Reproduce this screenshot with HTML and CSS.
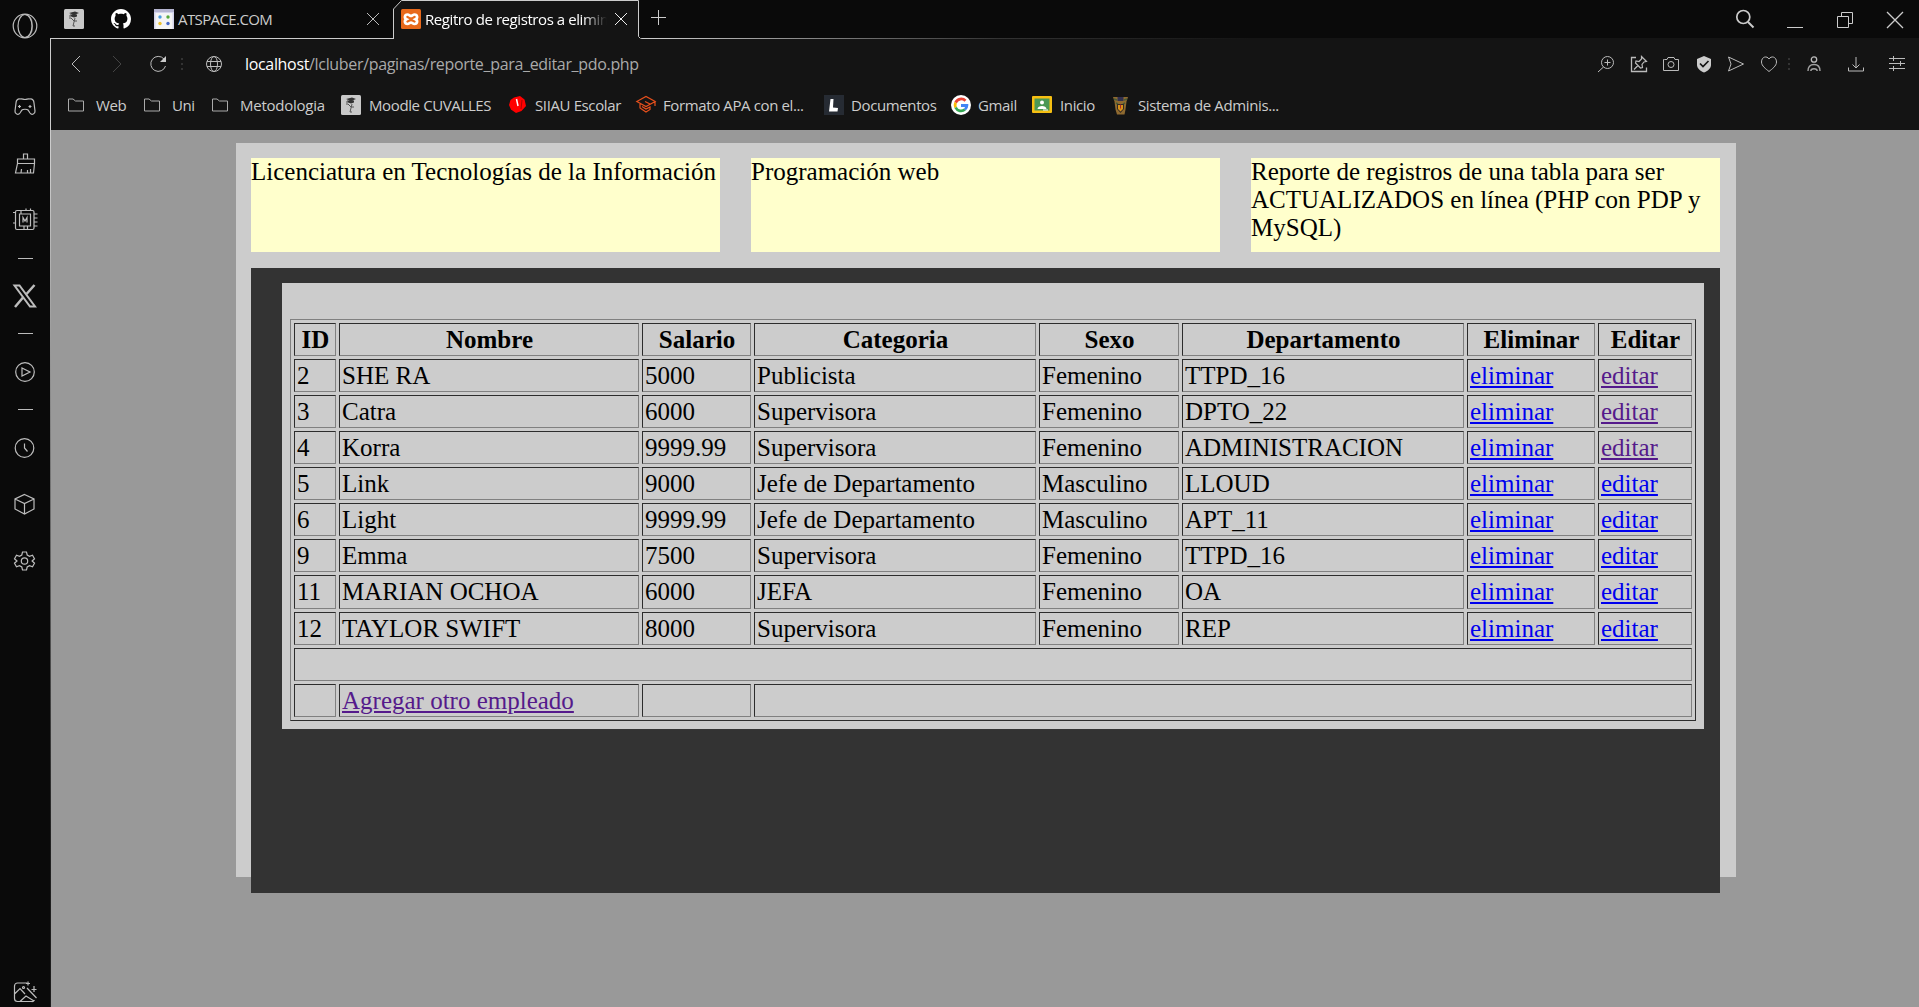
FILE: index.html
```html
<!DOCTYPE html>
<html lang="es">
<head>
<meta charset="utf-8">
<title>Regitro de registros a eliminar</title>
<link rel="stylesheet" href="styles.css">
</head>
<body>
<div class="browser">
  <aside class="sidebar">
    <div class="slot slot-logo"><svg class="icon" viewBox="0 0 26 26"><circle cx="13" cy="13" r="11.8"/><ellipse cx="13" cy="13" rx="7" ry="11.500"/><path d="M13 1.500c5 1 7.500 5.500 7.500 11.500s-2.500 10.500-7.500 11.500" opacity=".6"/></svg></div>
    <div class="slot"><svg class="icon" viewBox="0 0 26 26"><path d="M4 9c0-3 2-4.500 4-4 2-.6 3 .5 5 .5s3-1.100 5-.5c2-.5 4 1 4 4l1 8c.3 3-3.200 4.500-5 2l-2-3c-1-1-5-1-6 0l-2 3c-1.800 2.500-5.300 1-5-2z"/><path d="M7.500 11v3M6 12.500h3M18 11v3M16.500 12.500h3"/></svg></div>
    <div class="slot"><svg class="icon" viewBox="0 0 26 26"><path d="M11.500 8V3h4v5M5.500 8h17v4.500h-17zM5.500 12.500L3.500 22h18l1-9.500M9 22l.5-4M15.500 22v-3M18.500 22v-4"/></svg></div>
    <div class="slot"><svg class="icon" viewBox="0 0 26 26"><path d="M5 3.500h15.500a1.500 1.500 0 0 1 1.500 1.500v16a1.500 1.500 0 0 1-1.500 1.500H5A1.500 1.500 0 0 1 3.500 21V5A1.500 1.500 0 0 1 5 3.500z"/><path d="M7.500 7h11v12h-11z"/><path d="M11 15.500V10.500l2 3.500 2-3.500v5M9 4v3M14 1.500v2M18.500 1.500v2M12 19v3.500M15.500 19v3.500M22 7h3.500M22 11h3.500M22 15h3.500M22 19h3.500M1 5.500h2.500M1 16h2.500"/></svg></div>
    <div class="divider"></div>
    <div class="slot"><svg class="icon" viewBox="0 0 26 26"><path d="M2.500 2.500h5L23 23.500h-5z" stroke-width="2"/><path d="M22.500 2L14.500 11M11 14.500L3 24" stroke-width="2.500"/></svg></div>
    <div class="divider"></div>
    <div class="slot"><svg class="icon" viewBox="0 0 26 26"><circle cx="13" cy="13" r="9.300"/><path d="M10 9l8 4-8 4z"/></svg></div>
    <div class="divider"></div>
    <div class="slot"><svg class="icon" viewBox="0 0 26 26"><circle cx="12.500" cy="13" r="9.300"/><path d="M12.500 8.500V13l3 3.500"/></svg></div>
    <div class="slot"><svg class="icon" viewBox="0 0 26 26"><path d="M12.500 3.500l9.500 4.500v10L12.500 23 3 18V8zM3 8l9.500 4.500L22 8M12.500 12.500V23"/></svg></div>
    <div class="slot"><svg class="icon" viewBox="0 0 26 26"><path d="M10.500 4h4l.7 3 2.300 1.300 3-1 2 3.500-2.400 2.200 2.400 2.200-2 3.500-3-1-2.300 1.300-.7 3h-4l-.7-3-2.300-1.300-3 1-2-3.500L5 13l-2.500-2.200 2-3.500 3 1L9.800 7z"/><circle cx="12.500" cy="13" r="3.200"/></svg></div>
    <div class="slot slot-bottom"><svg class="icon" viewBox="0 0 26 26"><path d="M15 4H5.500a3 3 0 0 0-3 3v12.500a3 3 0 0 0 3 3h14a3 3 0 0 0 3-1.500M2.500 15L8 9.500l5 5.500M8 22.500l6-5.500 8 5M15 9l9.500 10M16 2.500v4M14 4.500h4M22 7v6M19.500 10.500h5"/><circle cx="11.500" cy="8.500" r="1"/></svg></div>
  </aside>

  <div class="window">
    <header class="tabs">
      <div class="pin"><svg class="fav" viewBox="0 0 20 20"><rect width="20" height="20" rx="1.500" fill="#c9c9c9"/><path d="M5 4l6-1.500 4 1.500-5 2zM6 5.500h7v2l-3 1-3-1z" fill="#333"/><path d="M6 6v4M7 9l3 3h3M11 9l-2 8h2" fill="none" stroke="#555"/></svg></div>
      <div class="pin"><svg class="fav" viewBox="0 0 16 16"><path fill="#fff" d="M8 0C3.580 0 0 3.580 0 8c0 3.540 2.290 6.530 5.470 7.590.4.070.55-.17.55-.38 0-.19-.01-.82-.01-1.490-2.010.37-2.530-.49-2.690-.94-.09-.23-.48-.94-.82-1.130-.28-.15-.68-.52-.01-.53.63-.01 1.080.58 1.230.82.720 1.210 1.870.87 2.330.66.070-.52.280-.87.510-1.070-1.780-.2-3.640-.89-3.640-3.950 0-.87.310-1.590.820-2.150-.08-.2-.36-1.020.080-2.120 0 0 .67-.21 2.200.820.640-.18 1.320-.27 2-.27s1.360.09 2 .27c1.530-1.040 2.200-.82 2.200-.82.440 1.100.160 1.920.080 2.120.510.560.820 1.270.820 2.150 0 3.070-1.870 3.750-3.650 3.950.290.250.540.730.540 1.480 0 1.070-.01 1.930-.01 2.200 0 .21.150.46.550.38A8.010 8.010 0 0 0 16 8c0-4.420-3.580-8-8-8z"/></svg></div>
      <div class="tab">
        <svg class="fav" viewBox="0 0 20 20"><rect width="20" height="20" fill="#f5f5f5"/><rect width="20" height="3.500" fill="#b4b4d0"/><path d="M0 3h20v1H0zM0 4h1.500v16H0zM18.500 4H20v16h-1.500z" fill="#d4d4ec"/><circle cx="6" cy="8" r="1.700" fill="#4a9be0"/><circle cx="14" cy="8" r="1.700" fill="#55a83c"/><circle cx="6" cy="14.500" r="1.700" fill="#eec22e"/><circle cx="14" cy="14.500" r="1.700" fill="#4569c8"/></svg>
        <span class="tab-title t-atspace">ATSPACE.COM</span>
        <svg class="close" viewBox="0 0 14 14"><path d="M1 1l12 12M13 1L1 13"/></svg>
      </div>
      <div class="tab tab-active">
        <svg class="tab-shape" viewBox="0 0 248 40"><path class="tab-fill" d="M.5 39V9.500L9 .5h236.500V36l3 3V40H0z"/><path class="tab-line" d="M.5 39V9L8.500.5h237V36.500l2 2"/></svg>
        <svg class="fav" viewBox="0 0 20 20"><rect width="20" height="20" rx="1.500" fill="#e8691b"/><path d="M6.500 5.500c-3 0-3.500 3.500-1 4.700-2.500 1.300-2 4.800 1 4.800 1.500 0 2.500-1.500 3.500-1.500s2 1.500 3.500 1.500c3 0 3.500-3.500 1-4.800 2.500-1.200 2-4.700-1-4.700-1.500 0-2.500 1.500-3.500 1.500s-2-1.500-3.500-1.500z" fill="none" stroke="#fff" stroke-width="2.700"/></svg>
        <span class="tab-title t-active">Regitro de registros a elimin</span>
        <svg class="close" viewBox="0 0 14 14"><path d="M1 1l12 12M13 1L1 13"/></svg>
      </div>
      <svg class="plus" viewBox="0 0 15 15"><path d="M7.500 0v15M0 7.500h15"/></svg>
      <div class="win-controls">
        <svg class="ctl" viewBox="0 0 24 24"><circle cx="10.300" cy="10" r="6.500" stroke-width="1.700"/><path d="M15 15l5.500 5.500" stroke-width="2"/></svg>
        <svg class="ctl" viewBox="0 0 24 24"><path d="M4 20.500h16"/></svg>
        <svg class="ctl" viewBox="0 0 24 24"><path d="M4.500 9.500h11v11h-11zM8.500 9.500v-4h11v11h-4"/></svg>
        <svg class="ctl" viewBox="0 0 24 24"><path d="M4 5l16 16M20 5L4 21" stroke-width="1.300"/></svg>
      </div>
    </header>

    <nav class="toolbar">
      <svg class="tool" viewBox="0 0 24 24"><path d="M16 4l-8 8 8 8"/></svg>
      <svg class="tool dim" viewBox="0 0 24 24"><path d="M8 4l8 8-8 8"/></svg>
      <svg class="tool" viewBox="0 0 24 24"><path d="M18 7a7.500 7.500 0 1 0 1.500 7"/><path d="M20 4v6h-6z" fill="#ccc" stroke="none"/></svg>
      <span class="dots"></span>
      <svg class="tool" viewBox="0 0 24 24"><circle cx="12" cy="12" r="7.500"/><ellipse cx="12" cy="12" rx="3.500" ry="7.500"/><path d="M5 9.500h14M5 14.500h14"/></svg>
      <span class="url"><b>localhost</b>/lcluber/paginas/reporte_para_editar_pdo.php</span>
      <svg class="tool" viewBox="0 0 24 24"><circle cx="13.500" cy="10.500" r="6"/><path d="M9.500 15L4 20M13.500 7.500v6M10.500 10.500h6"/></svg>
      <svg class="tool" viewBox="0 0 24 24"><path d="M9 5.500H4.500v14h15v-4" stroke-width="1.300"/><path d="M14.500 4.500l5 5-2.500.5-2 2.500.5 3-2 .5-5-5 .5-2 3 .5 2.500-2.500zM11 13.500L7 17.500" stroke-width="1.200"/></svg>
      <svg class="tool" viewBox="0 0 24 24"><path d="M5.500 7.500H8l1-2h6l1 2h3.500v11h-15v-11z"/><circle cx="12" cy="12.500" r="3"/></svg>
      <svg class="tool" viewBox="0 0 24 24"><path d="M12 4l7 3v6c0 3.500-3.500 6-7 7.500C8.500 19 5 16.500 5 13V7z" fill="#ccc" stroke="none"/><path d="M8 11.500l3 3 5.500-5.500" stroke="#141414" stroke-width="1.700"/></svg>
      <svg class="tool" viewBox="0 0 24 24"><path d="M4.500 5L19.500 12l-15 7 2.500-7z"/></svg>
      <svg class="tool" viewBox="0 0 24 24"><path d="M12 7C10 3.500 4.500 4.500 4.500 10c0 4 4.500 7 7.500 9.500 3-2.500 7.500-5.500 7.500-9.500C19.500 4.500 14 3.500 12 7z"/></svg>
      <span class="dots"></span>
      <svg class="tool" viewBox="0 0 24 24"><circle cx="12" cy="7.500" r="2.700" stroke-width="1.300"/><path d="M6 19c0-4 2-6.500 6-6.500s6 2.500 6 6.500M8.800 19c0-3 6.400-3 6.400 0" stroke-width="1.400" opacity=".85"/></svg>
      <svg class="tool" viewBox="0 0 24 24"><path d="M12 5v11M8.500 12.500L12 16l3.500-3.500M4.500 15.500v3.500h15v-3.500"/></svg>
      <svg class="tool" viewBox="0 0 24 24"><path d="M4 6.500h16M4 11.500h16M4 16.500h16M8.500 4v5M15.500 9v5M8.500 14v5"/></svg>
    </nav>

    <nav class="bookmarks">
      <a class="bm bm-web"><svg class="folder" viewBox="0 0 18 14"><path d="M1.500 1h4.500l2.500 2h8v10h-15z"/></svg><span>Web</span></a>
      <a class="bm bm-uni"><svg class="folder" viewBox="0 0 18 14"><path d="M1.500 1h4.500l2.500 2h8v10h-15z"/></svg><span>Uni</span></a>
      <a class="bm bm-met"><svg class="folder" viewBox="0 0 18 14"><path d="M1.500 1h4.500l2.500 2h8v10h-15z"/></svg><span>Metodologia</span></a>
      <a class="bm bm-moodle"><svg class="fav" viewBox="0 0 20 20"><rect width="20" height="20" rx="1.500" fill="#c9c9c9"/><path d="M5 4l6-1.500 4 1.500-5 2zM6 5.500h7v2l-3 1-3-1z" fill="#333"/><path d="M6 6v4M7 9l3 3h3M11 9l-2 8h2" fill="none" stroke="#555"/></svg><span>Moodle CUVALLES</span></a>
      <a class="bm bm-siiau"><svg class="fav" viewBox="0 0 20 20"><path d="M6 2.500L12 1l4.500 3.500L18 11l-4.500 5-5.500 2-5-3.500L1 10l1.500-5z" fill="#f00"/><path d="M8.500 4l1.500 7" stroke="#fff" stroke-width="1.500"/><path d="M14 5l-1 9" stroke="#a00"/></svg><span>SIIAU Escolar</span></a>
      <a class="bm bm-apa"><svg class="fav" viewBox="0 0 20 20"><path d="M.8 6.500L10 1.500l9.200 5-9.200 5zM19 6.500V11M4 9v4l6 4 4-2.500V12l-4 2-4-2.500M9 6.500l5 2.500" fill="none" stroke="#e8501c" stroke-width="1.200"/></svg><span>Formato APA con el...</span></a>
      <a class="bm bm-doc"><svg class="fav" viewBox="0 0 20 20"><rect width="20" height="20" fill="#262b33"/><path d="M6.500 4h3l-.5 8.500 5 .5-.5 3.500H5z" fill="#fff"/></svg><span>Documentos</span></a>
      <a class="bm bm-gmail"><svg class="fav" viewBox="0 0 20 20"><circle cx="10" cy="10" r="10" fill="#fff"/><g fill="none" stroke-width="2.800"><path d="M14.500 5.800A6 6 0 0 0 4.600 7.600" stroke="#ea4335"/><path d="M4.600 7.600a6 6 0 0 0 0 4.900" stroke="#fbbc05"/><path d="M4.600 12.500a6 6 0 0 0 9.300 2" stroke="#34a853"/><path d="M13.900 14.500c1.500-1.200 2-2.500 2-4H10" stroke="#4285f4"/></g></svg><span>Gmail</span></a>
      <a class="bm bm-inicio"><svg class="fav" viewBox="0 0 20 20"><rect y="1" width="20" height="17" rx="1" fill="#f6bf12"/><rect x="2.500" y="3.500" width="15" height="12" fill="#4a9855"/><circle cx="10" cy="7.500" r="2" fill="#fff"/><path d="M5.500 14c0-4 9-4 9 0zM11 14.500h5v1h-5z" fill="#fff"/></svg><span>Inicio</span></a>
      <a class="bm bm-sis"><svg class="fav" viewBox="0 0 20 20"><path d="M2 2h15l-1.500 4.500-1 8-1 5H6l-1.500-5-1-8z" fill="#8f6a30"/><path d="M3 4l3 1M16 4l-3 1M5 8l2 1M14 8l-2 1" stroke="#465c35" stroke-width="1.500"/><path d="M6.500 2h6v4h-6z" fill="#313050"/><path d="M6 9h7v5l-3.500 4L6 14z" fill="#332b26"/><path d="M7 10h5v4l-2.500 2.500L7 14z" fill="#d89018"/><path d="M9.500 9.500v4" stroke="#b02824"/></svg><span>Sistema de Adminis...</span></a>
    </nav>

    <main class="page">
      <div class="container">
        <div class="heads">
          <div class="head">Licenciatura en Tecnologías de la Información</div>
          <div class="head">Programación web</div>
          <div class="head">Reporte de registros de una tabla para ser ACTUALIZADOS en línea (PHP con PDP y MySQL)</div>
        </div>
        <div class="body-box">
          <div class="inner">
            <table class="report">
              <colgroup><col class="c-id"><col class="c-nombre"><col class="c-salario"><col class="c-cat"><col class="c-sexo"><col class="c-dep"><col class="c-elim"><col class="c-edit"></colgroup>
              <tr><th>ID</th><th>Nombre</th><th>Salario</th><th>Categoria</th><th>Sexo</th><th>Departamento</th><th>Eliminar</th><th>Editar</th></tr>
              <tr><td>2</td><td>SHE RA</td><td>5000</td><td>Publicista</td><td>Femenino</td><td>TTPD_16</td><td><a class="link">eliminar</a></td><td><a class="link seen">editar</a></td></tr>
              <tr><td>3</td><td>Catra</td><td>6000</td><td>Supervisora</td><td>Femenino</td><td>DPTO_22</td><td><a class="link">eliminar</a></td><td><a class="link seen">editar</a></td></tr>
              <tr><td>4</td><td>Korra</td><td>9999.99</td><td>Supervisora</td><td>Femenino</td><td>ADMINISTRACION</td><td><a class="link">eliminar</a></td><td><a class="link seen">editar</a></td></tr>
              <tr><td>5</td><td>Link</td><td>9000</td><td>Jefe de Departamento</td><td>Masculino</td><td>LLOUD</td><td><a class="link">eliminar</a></td><td><a class="link">editar</a></td></tr>
              <tr><td>6</td><td>Light</td><td>9999.99</td><td>Jefe de Departamento</td><td>Masculino</td><td>APT_11</td><td><a class="link">eliminar</a></td><td><a class="link">editar</a></td></tr>
              <tr><td>9</td><td>Emma</td><td>7500</td><td>Supervisora</td><td>Femenino</td><td>TTPD_16</td><td><a class="link">eliminar</a></td><td><a class="link">editar</a></td></tr>
              <tr class="tall"><td>11</td><td>MARIAN OCHOA</td><td>6000</td><td>JEFA</td><td>Femenino</td><td>OA</td><td><a class="link">eliminar</a></td><td><a class="link">editar</a></td></tr>
              <tr><td>12</td><td>TAYLOR SWIFT</td><td>8000</td><td>Supervisora</td><td>Femenino</td><td>REP</td><td><a class="link">eliminar</a></td><td><a class="link">editar</a></td></tr>
              <tr><td colspan="8">&nbsp;</td></tr>
              <tr><td>&nbsp;</td><td><a class="link seen">Agregar otro empleado</a></td><td>&nbsp;</td><td colspan="5">&nbsp;</td></tr>
            </table>
          </div>
        </div>
      </div>
    </main>
  </div>
</div>
</body>
</html>
```
FILE: styles.css
```css
* { box-sizing: border-box; }
body { margin: 0; background: #0a0a0a; }
svg { display: block; flex: none; overflow: visible; fill: none; }

.browser {
  display: flex;
  width: 1919px;
  height: 1007px;
  overflow: hidden;
  background: #0a0a0a;
  font-family: "Open Sans", "Noto Sans", sans-serif;
  font-size: 15px;
  color: #ccc;
}

/* sidebar */
.sidebar {
  display: flex;
  flex-direction: column;
  align-items: center;
  width: 50px;
  flex: none;
}
.slot { display: flex; align-items: center; height: 56.5px; flex: none; }
.slot-logo { height: 51px; margin-bottom: 28px; }
.slot-bottom { height: 30px; margin-top: auto; }
.icon { width: 26px; height: 26px; stroke: #bdbdbd; stroke-width: 1.2; }
.divider { width: 15px; height: 1px; margin: 9px 0 9.3px; background: #bbb; flex: none; }

/* window: the left edge line starts below the tab bar */
.window {
  display: flex;
  flex-direction: column;
  width: 1869px;
  flex: none;
  background: linear-gradient(#ccc, #ccc 130px, #777 430px, #222 800px, #1a1a1a) 0 38px / 1px 100% no-repeat;
}

/* tabs */
.tabs {
  display: flex;
  align-items: center;
  height: 39px;
  flex: none;
  padding-bottom: 2px;
  background: linear-gradient(90deg, #ccc 600px, #333 950px, #141414 1200px) 0 38px / 100% 1px no-repeat;
}
.fav { width: 20px; height: 20px; }
.pin { width: 47px; padding-left: 14px; }
.tab { display: flex; align-items: center; width: 246px; padding-left: 10px; }
.tab:nth-child(3) { width: 249px; }
.tab-title { margin-left: 4px; white-space: nowrap; }
.t-atspace { letter-spacing: -0.6px; width: 188px; }
.t-active {
  width: 183px;
  color: #fff;
  letter-spacing: -0.42px;
  -webkit-mask-image: linear-gradient(90deg, #000 158px, transparent 182px);
  mask-image: linear-gradient(90deg, #000 158px, transparent 182px);
}
.close { width: 14px; height: 14px; stroke: #bbb; }
.tab-active { position: relative; align-self: flex-start; height: 39px; padding: 0 0 2px 8px; }
.tab-active > * { position: relative; }
.tab-active .close { margin-left: 6px; stroke: #eee; }
.tab-active .tab-shape { position: absolute; left: 0; top: 0; width: 248px; height: 40px; }
.tab-fill { fill: #141414; }
.tab-line { stroke: #ccc; }
.plus { width: 15px; height: 15px; margin: 0 0 2px 12px; stroke: #ccc; }
.win-controls { display: flex; margin: 0 12px 0 auto; gap: 26px; }
.ctl { width: 24px; height: 24px; stroke: #ccc; stroke-width: 1; }

/* toolbar */
.toolbar {
  display: grid;
  grid-template-columns: 41px 41px 42px 6px 58px 1fr repeat(6, 32.5px) 8px 42px 41px 42px;
  align-items: center;
  justify-items: center;
  height: 50px;
  flex: none;
  margin-left: 1px;
  padding: 0 1px 0 4px;
  background: #141414;
}
.tool { width: 24px; height: 24px; stroke: #bbb; stroke-width: 1; }
.dim { stroke: #444; }
.dots {
  width: 2px;
  height: 12px;
  background: repeating-linear-gradient(#333 0 2px, transparent 2px 5px);
}
.url {
  justify-self: start;
  padding-left: 2px;
  font-size: 16px;
  color: #aaa;
  letter-spacing: -0.33px;
}
.url b { font-weight: 400; color: #fff; }

/* bookmarks */
.bookmarks {
  display: flex;
  align-items: center;
  height: 41px;
  flex: none;
  margin-left: 1px;
  padding: 0 0 9px 16px;
  background: #141414;
}
.bm { display: flex; align-items: center; flex: none; white-space: nowrap; letter-spacing: -0.38px; }
.folder { width: 18px; height: 14px; margin-right: 11px; stroke: #aaa; }
.bm .fav { margin-right: 7px; }
.bm-web { width: 76px; }
.bm-uni { width: 68px; }
.bm-met { width: 130px; letter-spacing: -0.25px; }
.bm-moodle { width: 167px; }
.bm-siiau { width: 128px; }
.bm-apa { width: 188px; }
.bm-doc { width: 127px; }
.bm-gmail { width: 81px; }
.bm-inicio { width: 79px; }
.bm-moodle .fav { margin-right: 8px; }
.bm-inicio .fav { margin-right: 8px; }

/* page */
.page {
  flex: 1;
  margin-left: 1px;
  padding: 13px 0 0 185px;
  background: #999;
  color: #000;
  font-family: "Liberation Serif", "Times New Roman", serif;
  font-size: 25px;
  line-height: 28px;
}
.container { width: 1500px; height: 734px; padding: 15px 16px 0 15px; background: #ccc; }
.heads { display: grid; grid-template-columns: repeat(3, 469px); column-gap: 31px; height: 94px; }
.head { background: #ffc; }
.body-box { height: 625px; margin-top: 16px; padding: 15px 16px 0 31px; background: #333; }
.inner { height: 446px; padding: 36px 8px 0; background: #ccc; }

.report {
  table-layout: fixed;
  width: 1406px;
  border: 1px solid;
  border-color: #808080 #2c2c2c #2c2c2c #808080;
  border-spacing: 3px;
}
.report th, .report td {
  height: 33px;
  padding: 2px 1px 1px 2px;
  border: 1px solid;
  border-color: #2c2c2c #808080 #808080 #2c2c2c;
  white-space: nowrap;
  vertical-align: top;
}
.report .tall td { height: 34px; }
.c-id { width: 42px; }
.c-nombre { width: 300px; }
.c-salario { width: 109px; }
.c-cat { width: 282px; }
.c-sexo { width: 140px; }
.c-dep { width: 282px; }
.c-elim { width: 128px; }
.c-edit { width: 94px; }
.link { color: #00e; text-decoration: underline; }
.seen { color: #551a8b; }
```
